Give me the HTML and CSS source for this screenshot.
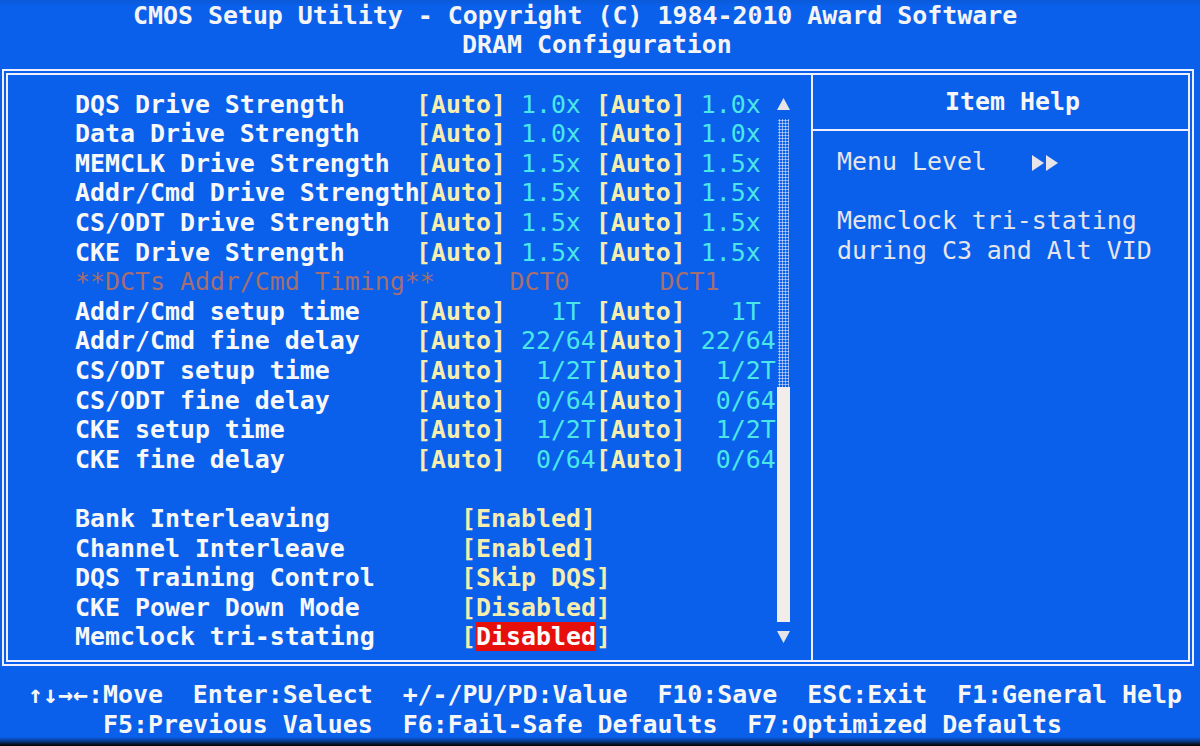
FILE: index.html
```html
<!DOCTYPE html>
<html lang="en">
<head>
<meta charset="utf-8">
<title>CMOS Setup Utility - DRAM Configuration</title>
<link rel="stylesheet" href="styles.css">
</head>
<body>
<div class="screen">
  <header class="title">
    <div class="title-line main">CMOS Setup Utility - Copyright (C) 1984-2010 Award Software</div>
    <div class="title-line sub">DRAM Configuration</div>
  </header>

  <main class="frame">
    <section class="menu">
      <div class="list">
        <div class="row"><span class="label">DQS Drive Strength</span><span class="opt">[Auto]</span><span class="val"> 1.0x </span><span class="opt">[Auto]</span><span class="val"> 1.0x</span></div>
        <div class="row"><span class="label">Data Drive Strength</span><span class="opt">[Auto]</span><span class="val"> 1.0x </span><span class="opt">[Auto]</span><span class="val"> 1.0x</span></div>
        <div class="row"><span class="label">MEMCLK Drive Strength</span><span class="opt">[Auto]</span><span class="val"> 1.5x </span><span class="opt">[Auto]</span><span class="val"> 1.5x</span></div>
        <div class="row"><span class="label">Addr/Cmd Drive Strength</span><span class="opt">[Auto]</span><span class="val"> 1.5x </span><span class="opt">[Auto]</span><span class="val"> 1.5x</span></div>
        <div class="row"><span class="label">CS/ODT Drive Strength</span><span class="opt">[Auto]</span><span class="val"> 1.5x </span><span class="opt">[Auto]</span><span class="val"> 1.5x</span></div>
        <div class="row"><span class="label">CKE Drive Strength</span><span class="opt">[Auto]</span><span class="val"> 1.5x </span><span class="opt">[Auto]</span><span class="val"> 1.5x</span></div>
        <div class="row heading">**DCTs Addr/Cmd Timing**     DCT0      DCT1</div>
        <div class="row"><span class="label">Addr/Cmd setup time</span><span class="opt">[Auto]</span><span class="val">   1T </span><span class="opt">[Auto]</span><span class="val">   1T</span></div>
        <div class="row"><span class="label">Addr/Cmd fine delay</span><span class="opt">[Auto]</span><span class="val"> 22/64</span><span class="opt">[Auto]</span><span class="val"> 22/64</span></div>
        <div class="row"><span class="label">CS/ODT setup time</span><span class="opt">[Auto]</span><span class="val">  1/2T</span><span class="opt">[Auto]</span><span class="val">  1/2T</span></div>
        <div class="row"><span class="label">CS/ODT fine delay</span><span class="opt">[Auto]</span><span class="val">  0/64</span><span class="opt">[Auto]</span><span class="val">  0/64</span></div>
        <div class="row"><span class="label">CKE setup time</span><span class="opt">[Auto]</span><span class="val">  1/2T</span><span class="opt">[Auto]</span><span class="val">  1/2T</span></div>
        <div class="row"><span class="label">CKE fine delay</span><span class="opt">[Auto]</span><span class="val">  0/64</span><span class="opt">[Auto]</span><span class="val">  0/64</span></div>
        <div class="row blank"></div>
        <div class="row"><span class="label wide">Bank Interleaving</span><span class="opt">[Enabled]</span></div>
        <div class="row"><span class="label wide">Channel Interleave</span><span class="opt">[Enabled]</span></div>
        <div class="row"><span class="label wide">DQS Training Control</span><span class="opt">[Skip DQS]</span></div>
        <div class="row"><span class="label wide">CKE Power Down Mode</span><span class="opt">[Disabled]</span></div>
        <div class="row"><span class="label wide">Memclock tri-stating</span><span class="opt">[<span class="sel">Disabled</span>]</span></div>
      </div>

      <div class="scroll">
        <div class="arrow">
          <svg class="tri" width="13" height="12" viewBox="0 0 13 12"><polygon points="6.5,0 13,12 0,12"/></svg>
        </div>
        <div class="track"></div>
        <div class="thumb"></div>
        <div class="arrow">
          <svg class="tri" width="13" height="12" viewBox="0 0 13 12"><polygon points="0,0 13,0 6.5,12"/></svg>
        </div>
      </div>
    </section>

    <aside class="help">
      <div class="help-head">Item Help</div>
      <div class="help-body">
        <div class="help-line"><span class="help-text">Menu Level   </span><svg class="level" width="27" height="16" viewBox="0 0 27 16"><polygon points="0,0 12,8 0,16"/><polygon points="14,0 26,8 14,16"/></svg></div>
        <div class="help-line"></div>
        <div class="help-line">Memclock tri-stating</div>
        <div class="help-line">during C3 and Alt VID</div>
      </div>
    </aside>
  </main>

  <footer class="keys">
    <div class="keys-line first">↑↓→←:Move  Enter:Select  +/-/PU/PD:Value  F10:Save  ESC:Exit  F1:General Help</div>
    <div class="keys-line second">F5:Previous Values  F6:Fail-Safe Defaults  F7:Optimized Defaults</div>
  </footer>
</div>
</body>
</html>
```

FILE: styles.css
```css
html, body {
  margin: 0;
  padding: 0;
}

body {
  width: 1200px;
  height: 746px;
  overflow: hidden;
  background: linear-gradient(to bottom, #0a5ad8 0, #0a60ea 6px, #0a60ea 737px, #0a3c90 741px, #07080f 745px);
  font-family: "DejaVu Sans Mono", "Liberation Mono", monospace;
  font-size: 24.9px;
  color: #f6f6f6;
}

.screen {
  width: 1200px;
  height: 746px;
  display: flex;
  flex-direction: column;
}

/* ---------- title ---------- */
.title {
  height: 69px;
  flex: none;
  box-sizing: border-box;
  padding-top: 1px;
  line-height: 29px;
  font-weight: bold;
  color: #f4f4f6;
}

.title-line {
  height: 29px;
  white-space: pre;
}

.title-line.main {
  padding-left: 133px;
}

.title-line.sub {
  padding-left: 462px;
}

/* ---------- frame ---------- */
.frame {
  flex: none;
  margin-left: 2px;
  width: 1192px;
  height: 597px;
  box-sizing: border-box;
  border: 6px double #eef0ff;
  display: flex;
}

.menu {
  width: 803px;
  flex: none;
  box-sizing: border-box;
  padding: 14.6px 0 0 67px;
  display: flex;
  align-items: flex-start;
}

.list {
  width: 701px;
  flex: none;
  line-height: 29.6px;
}

.row {
  height: 29.6px;
  white-space: pre;
}

.label {
  display: inline-block;
  width: 341px;
  font-weight: bold;
  color: #f8f8f8;
}

.label.wide {
  width: 386px;
}

.opt {
  font-weight: bold;
  color: #f6eeae;
}

.val {
  color: #4ae6e8;
}

.heading {
  color: #a46e72;
}

.sel {
  background: #e60f0c;
  color: #fbfbfb;
}

/* ---------- scrollbar ---------- */
.scroll {
  width: 14px;
  flex: none;
  display: flex;
  flex-direction: column;
  align-items: center;
}

.arrow {
  height: 29.6px;
  display: flex;
  align-items: center;
  justify-content: center;
}

.tri {
  display: block;
  fill: #e6e4e8;
}

.track {
  width: 11px;
  height: 268px;
  background-image: radial-gradient(circle, #c4d2f4 0.9px, transparent 1.2px);
  background-size: 3px 3px;
}

.thumb {
  width: 13px;
  height: 235px;
  background: #f2eceb;
}

/* ---------- help panel ---------- */
.help {
  flex: 1;
  border-left: 2px solid #eef0ff;
  display: flex;
  flex-direction: column;
}

.help-head {
  height: 56px;
  box-sizing: border-box;
  padding: 12px 0 0 132px;
  line-height: 29.6px;
  font-weight: bold;
  color: #f6f6f6;
  border-bottom: 2px solid #eef0ff;
}

.help-body {
  padding: 16px 0 0 24px;
  line-height: 29.6px;
  color: #e6e6ea;
}

.help-line {
  height: 29.6px;
  white-space: pre;
}

.level {
  vertical-align: -1px;
  fill: #e6e6ea;
}

/* ---------- footer ---------- */
.keys {
  flex: none;
  margin-top: 14.4px;
  line-height: 30px;
  font-weight: bold;
  color: #f6f6f6;
}

.keys-line {
  height: 30px;
  white-space: pre;
}

.keys-line.first {
  padding-left: 28px;
}

.keys-line.second {
  padding-left: 103px;
}
```
